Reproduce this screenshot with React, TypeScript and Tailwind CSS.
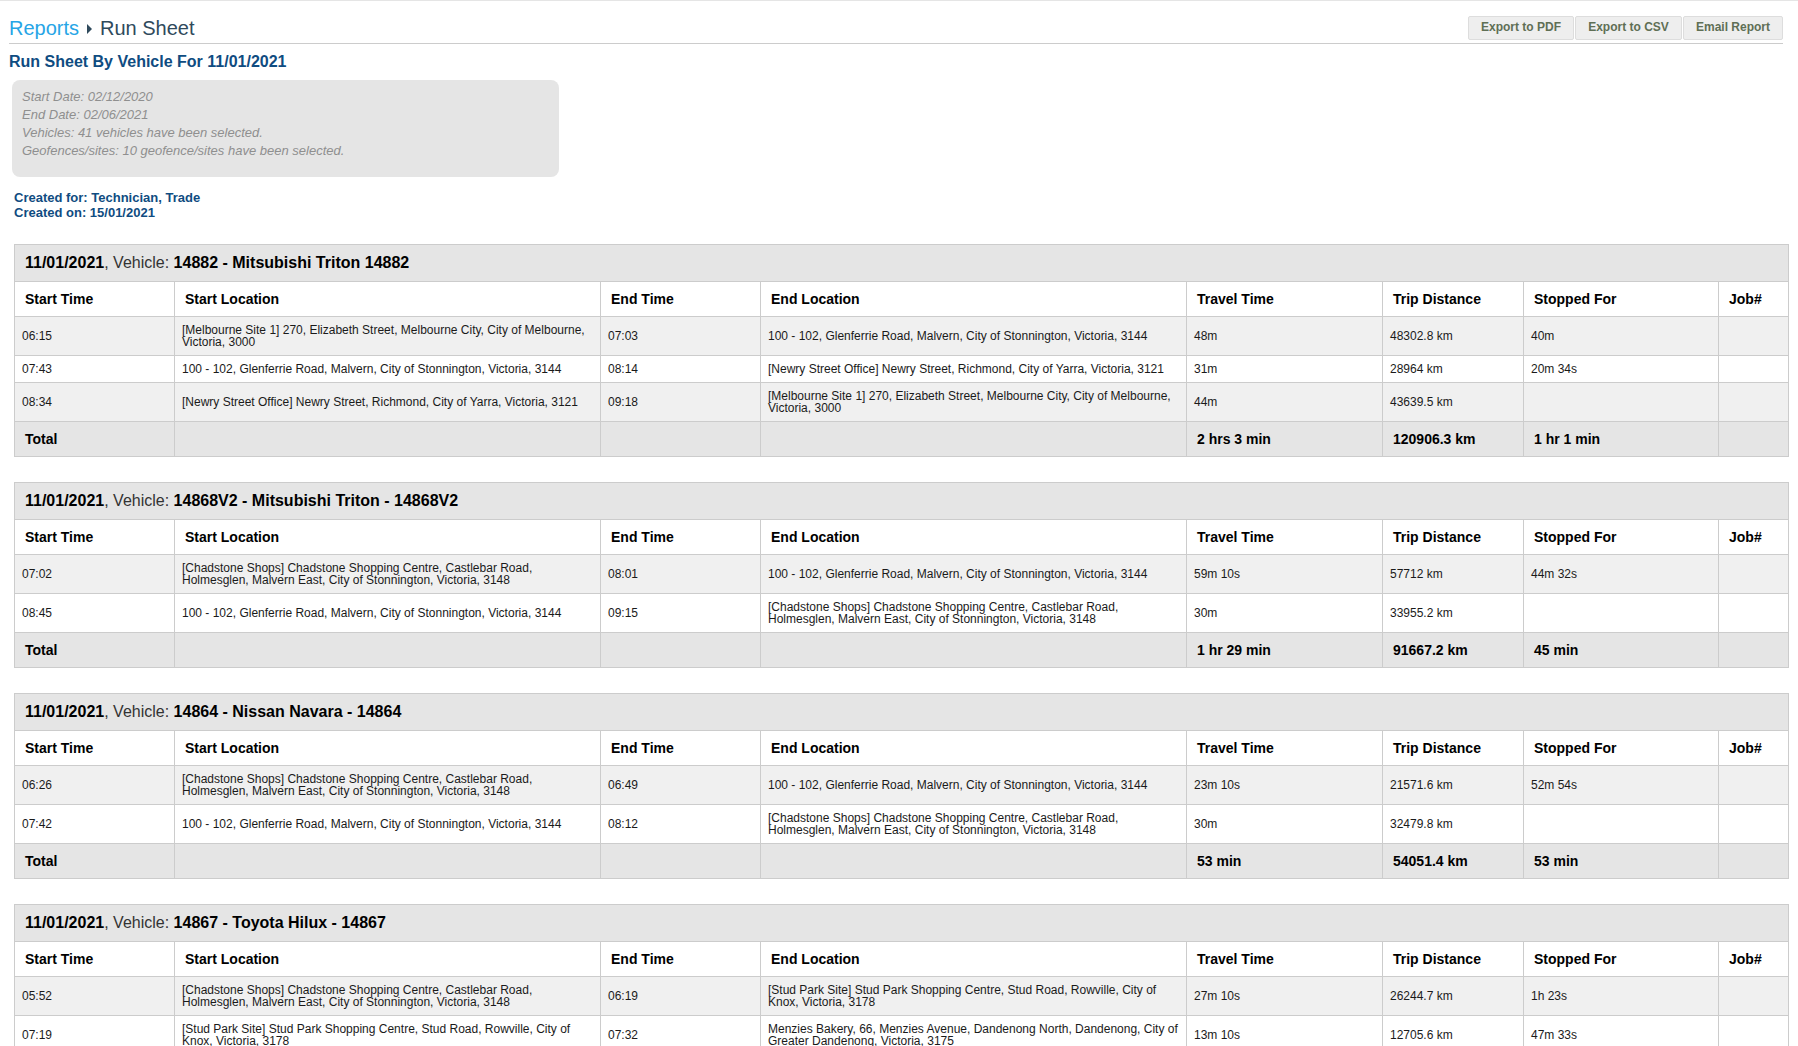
const cols = [
  "w-[160px]",
  "w-[426px]",
  "w-[160px]",
  "w-[426px]",
  "w-[196px]",
  "w-[141px]",
  "w-[195px]",
  "w-[70px]",
];
const headings = ["Start Time", "Start Location", "End Time", "End Location", "Travel Time", "Trip Distance", "Stopped For", "Job#"];

const glenferrie = "100 - 102, Glenferrie Road, Malvern, City of Stonnington, Victoria, 3144";
const melbourne = "[Melbourne Site 1] 270, Elizabeth Street, Melbourne City, City of Melbourne, Victoria, 3000";
const newry = "[Newry Street Office] Newry Street, Richmond, City of Yarra, Victoria, 3121";
const chadstone = "[Chadstone Shops] Chadstone Shopping Centre, Castlebar Road, Holmesglen, Malvern East, City of Stonnington, Victoria, 3148";
const studPark = "[Stud Park Site] Stud Park Shopping Centre, Stud Road, Rowville, City of Knox, Victoria, 3178";
const menzies = "Menzies Bakery, 66, Menzies Avenue, Dandenong North, Dandenong, City of Greater Dandenong, Victoria, 3175";

type Report = {
  vehicle: string;
  rows: string[][];
  total?: string[];
};

const reports: Report[] = [
  {
    vehicle: "14882 - Mitsubishi Triton 14882",
    rows: [
      ["06:15", melbourne, "07:03", glenferrie, "48m", "48302.8 km", "40m", ""],
      ["07:43", glenferrie, "08:14", newry, "31m", "28964 km", "20m 34s", ""],
      ["08:34", newry, "09:18", melbourne, "44m", "43639.5 km", "", ""],
    ],
    total: ["2 hrs 3 min", "120906.3 km", "1 hr 1 min"],
  },
  {
    vehicle: "14868V2 - Mitsubishi Triton - 14868V2",
    rows: [
      ["07:02", chadstone, "08:01", glenferrie, "59m 10s", "57712 km", "44m 32s", ""],
      ["08:45", glenferrie, "09:15", chadstone, "30m", "33955.2 km", "", ""],
    ],
    total: ["1 hr 29 min", "91667.2 km", "45 min"],
  },
  {
    vehicle: "14864 - Nissan Navara - 14864",
    rows: [
      ["06:26", chadstone, "06:49", glenferrie, "23m 10s", "21571.6 km", "52m 54s", ""],
      ["07:42", glenferrie, "08:12", chadstone, "30m", "32479.8 km", "", ""],
    ],
    total: ["53 min", "54051.4 km", "53 min"],
  },
  {
    vehicle: "14867 - Toyota Hilux - 14867",
    rows: [
      ["05:52", chadstone, "06:19", studPark, "27m 10s", "26244.7 km", "1h 23s", ""],
      ["07:19", studPark, "07:32", menzies, "13m 10s", "12705.6 km", "47m 33s", ""],
    ],
  },
];

function ReportTable({ report }: { report: Report }) {
  return (
    <table className="mb-[25px] w-full table-fixed border-collapse">
      <colgroup>
        {cols.map((col, i) => (
          <col key={i} className={col} />
        ))}
      </colgroup>
      <thead>
        <tr>
          <th colSpan={8} className="h-[37px] border border-[#cccccc] bg-[#e5e5e5] px-[10px] text-left text-[16px] leading-[18px] font-normal text-[#333333]">
            <b className="text-black">11/01/2021</b>, Vehicle: <b className="text-black">{report.vehicle}</b>
          </th>
        </tr>
        <tr>
          {headings.map((heading) => (
            <th key={heading} className="h-[35px] border border-[#cccccc] bg-white px-[10px] text-left text-[14px] leading-4 font-bold text-black">
              {heading}
            </th>
          ))}
        </tr>
      </thead>
      <tbody>
        {report.rows.map((row, r) => (
          <tr key={r} className={r % 2 === 0 ? "bg-[#f0f0f0]" : "bg-white"}>
            {row.map((cell, c) => (
              <td key={c} className="border border-[#cccccc] py-[7px] pr-[5px] pl-[7px] align-middle text-[12px] leading-3 text-[#1a1a1a]">
                {cell}
              </td>
            ))}
          </tr>
        ))}
        {report.total && (
          <tr className="bg-[#e5e5e5]">
            <td className="h-[35px] border border-[#cccccc] px-[10px] text-[14px] leading-4 font-bold text-black">Total</td>
            <td className="border border-[#cccccc]" />
            <td className="border border-[#cccccc]" />
            <td className="border border-[#cccccc]" />
            {report.total.map((value) => (
              <td key={value} className="border border-[#cccccc] px-[10px] text-[14px] leading-4 font-bold text-black">
                {value}
              </td>
            ))}
            <td className="border border-[#cccccc]" />
          </tr>
        )}
      </tbody>
    </table>
  );
}

export default function App() {
  return (
    <div className="h-[1046px] overflow-hidden border-t border-[#e5e5e5] bg-white font-['Liberation_Sans',Arial,sans-serif]">
      <div className="mr-[15px] ml-[9px] flex h-[43px] items-center justify-between border-b border-[#cccccc] pt-[11px]">
        <h1 className="flex items-center text-[20px] leading-6 font-normal text-[#2f4a5c]">
          <a className="text-[#27a5e6]">Reports</a>
          <svg width="5" height="10" viewBox="0 0 5 10" className="mx-[8px] mt-[2px]">
            <path d="M0 0 L5 5 L0 10 Z" fill="#2f4a5c" />
          </svg>
          Run Sheet
        </h1>
        <div className="flex gap-[1px]">
          <button className="h-[24px] w-[106px] rounded-[2px] border border-[#dddddd] bg-[#eeeeee] pb-[2px] text-[12px] font-bold text-[#5f6f55]">Export to PDF</button>
          <button className="h-[24px] w-[107px] rounded-[2px] border border-[#dddddd] bg-[#eeeeee] pb-[2px] text-[12px] font-bold text-[#5f6f55]">Export to CSV</button>
          <button className="h-[24px] w-[100px] rounded-[2px] border border-[#dddddd] bg-[#eeeeee] pb-[2px] text-[12px] font-bold text-[#5f6f55]">Email Report</button>
        </div>
      </div>

      <h2 className="mt-[8px] ml-[9px] text-[16px] leading-[20px] font-bold text-[#0f4c81]">Run Sheet By Vehicle For 11/01/2021</h2>

      <div className="mt-[8px] ml-[12px] h-[97px] w-[547px] rounded-lg bg-[#e5e5e5] px-[10px] pt-[8px] text-[13px] leading-[18px] text-[#8f8f8f] italic">
        <div>Start Date: 02/12/2020</div>
        <div>End Date: 02/06/2021</div>
        <div>Vehicles: 41 vehicles have been selected.</div>
        <div>Geofences/sites: 10 geofence/sites have been selected.</div>
      </div>

      <div className="mt-[13px] ml-[14px] text-[13px] leading-[15px] font-bold text-[#0f4c81]">
        <div>Created for: Technician, Trade</div>
        <div>Created on: 15/01/2021</div>
      </div>

      <div className="mt-[24px] mr-[10px] ml-[14px]">
        {reports.map((report) => (
          <ReportTable key={report.vehicle} report={report} />
        ))}
      </div>
    </div>
  );
}
